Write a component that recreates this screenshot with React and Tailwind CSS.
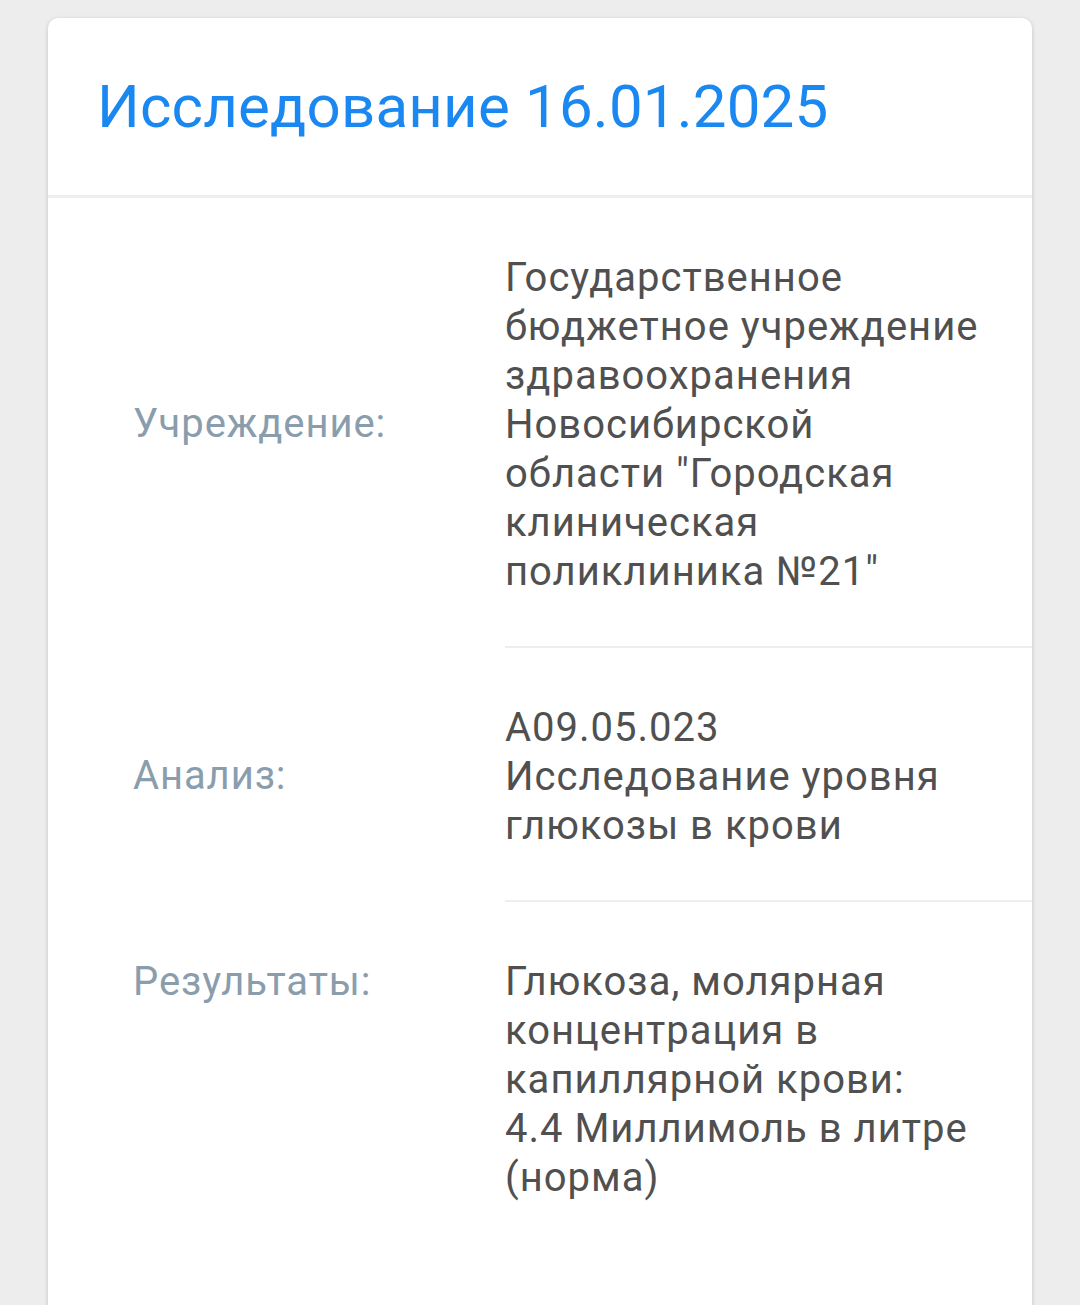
import React from "react";

const rows = [
  {
    label: "Учреждение:",
    value: [
      'Государственное бюджетное учреждение здравоохранения Новосибирской области "Городская клиническая поликлиника №21"',
    ],
    align: "items-center",
  },
  {
    label: "Анализ:",
    value: ["A09.05.023 Исследование уровня глюкозы в крови"],
    align: "items-center",
  },
  {
    label: "Результаты:",
    value: [
      "Глюкоза, молярная концентрация в капиллярной крови:",
      "4.4 Миллимоль в литре (норма)",
    ],
    align: "items-start",
  },
];

const App = () => {
  return (
    <div
      className="min-h-[1305px] bg-[#ededed] pt-[18px] px-[48px] overflow-hidden"
      style={{ fontFamily: "Roboto, 'Noto Sans', sans-serif" }}
    >
      <div className="bg-white rounded-t-[10px] shadow-[0_1px_4px_rgba(0,0,0,0.18)] min-h-[1300px]">
        {/* Header */}
        <div className="px-[49px] h-[180px] flex items-center border-b-[3px] border-[#eceef1]">
          <h1 className="text-[60px] leading-[70px] text-[#1a88f0] tracking-[0.2px]">
            Исследование 16.01.2025
          </h1>
        </div>

        {/* Rows */}
        {rows.map((row, i) => (
          <div key={row.label} className={`flex ${row.align}`}>
            <div className="w-[457px] shrink-0 pl-[85px] py-[55px] text-[40px] leading-[49px] tracking-[0.9px] text-[#8a9dad]">
              {row.label}
            </div>
            <div
              className={`flex-1 pr-[53px] pt-[55px] pb-[50px] text-[40px] leading-[49px] tracking-[1px] text-[#505050] ${
                i < rows.length - 1 ? "border-b-2 border-[#eceef1]" : ""
              }`}
            >
              {row.value.map((line) => (
                <p key={line}>{line}</p>
              ))}
            </div>
          </div>
        ))}
      </div>
    </div>
  );
};

export default App;
